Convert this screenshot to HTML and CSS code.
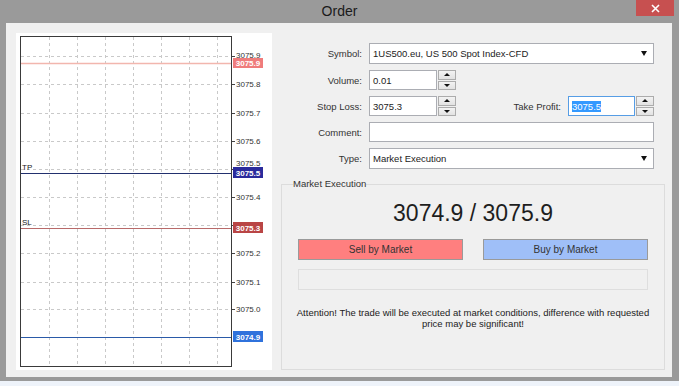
FILE: index.html
```html
<!DOCTYPE html>
<html lang="en">
<head>
    <meta charset="UTF-8">
    <meta name="viewport" content="width=device-width, initial-scale=1.0">
    <title>Order</title>
    <link rel="stylesheet" href="styles.css">
</head>
<body>
    <div class="window">
        <div class="titlebar">
            <span></span>
            <span class="title">Order</span>
            <button class="close">
                <svg width="9" height="9" viewBox="0 0 9 9"><path d="M1 1L8 8M8 1L1 8" stroke="#fff" stroke-width="1.6"/></svg>
            </button>
        </div>
        <div class="content">
            <div class="chart">
                <svg width="256" height="337" viewBox="0 0 256 337">
                    <g stroke="#c9c9c9" stroke-dasharray="3 3">
                        <path d="M33.5 4V333M61.5 4V333M89.5 4V333M117.5 4V333M145.5 4V333M173.5 4V333M201.5 4V333"/>
                        <path d="M5 23.5H215M5 51.5H215M5 80.5H215M5 108.5H215M5 136.5H215M5 164.5H215M5 192.5H215M5 220.5H215M5 249.5H215M5 276.5H215"/>
                    </g>
                    <path d="M215 23.5H219M215 51.5H219M215 80.5H219M215 108.5H219M215 136.5H219M215 164.5H219M215 192.5H219M215 220.5H219M215 249.5H219M215 276.5H219" stroke="#444"/>
                    <g class="axis">
                        <text x="220" y="22">3075.9</text>
                        <text x="220" y="51.5">3075.8</text>
                        <text x="220" y="80.5">3075.7</text>
                        <text x="220" y="108.5">3075.6</text>
                        <text x="220" y="130">3075.5</text>
                        <text x="220" y="164.5">3075.4</text>
                        <text x="220" y="220.5">3075.2</text>
                        <text x="220" y="249.5">3075.1</text>
                        <text x="220" y="276.5">3075.0</text>
                    </g>
                    <path d="M5 30.5H215" stroke="#f2b6ae" stroke-width="1.5"/>
                    <path d="M5 140.5H215" stroke="#22306e"/>
                    <path d="M5 195.5H215" stroke="#b86a6a"/>
                    <path d="M5 304.5H215" stroke="#2a5aa8"/>
                    <rect x="4.5" y="3.5" width="211" height="330" fill="none" stroke="#3a3a3a"/>
                    <text class="mark" x="6" y="137">TP</text>
                    <text class="mark" x="6" y="192">SL</text>
                    <rect x="217" y="25" width="30" height="10" fill="#ef7c7c"/>
                    <rect x="217" y="134" width="30" height="11" fill="#2b2b9c"/>
                    <rect x="217" y="189" width="30" height="11" fill="#b94545"/>
                    <rect x="217" y="298" width="30" height="11" fill="#2f72dc"/>
                    <g class="tag">
                        <text x="232" y="30.5">3075.9</text>
                        <text x="232" y="140">3075.5</text>
                        <text x="232" y="195">3075.3</text>
                        <text x="232" y="304">3074.9</text>
                    </g>
                </svg>
            </div>
            <div class="side">
                <div class="form">
                    <label>Symbol:</label>
                    <div class="field select">1US500.eu, US 500 Spot Index-CFD <span class="arrow"></span></div>

                    <label>Volume:</label>
                    <div class="pair">
                        <div class="spin">
                            <div class="field">0.01</div>
                            <div class="spinner"><span class="up"></span><span class="down"></span></div>
                        </div>
                    </div>

                    <label>Stop Loss:</label>
                    <div class="pair">
                        <div class="spin">
                            <div class="field">3075.3</div>
                            <div class="spinner"><span class="up"></span><span class="down"></span></div>
                        </div>
                        <label class="tp-label">Take Profit:</label>
                        <div class="spin tp">
                            <div class="field focus"><span class="sel">3075.5</span></div>
                            <div class="spinner"><span class="up"></span><span class="down"></span></div>
                        </div>
                    </div>

                    <label>Comment:</label>
                    <div class="field"></div>

                    <label>Type:</label>
                    <div class="field select">Market Execution <span class="arrow"></span></div>
                </div>

                <fieldset class="group">
                    <legend>Market Execution</legend>
                    <div class="price">3074.9 / 3075.9</div>
                    <div class="buttons">
                        <button class="sell">Sell by Market</button>
                        <button class="buy">Buy by Market</button>
                    </div>
                    <div class="status"></div>
                    <p class="note">Attention! The trade will be executed at market conditions, difference with requested<br>price may be significant!</p>
                </fieldset>
            </div>
        </div>
    </div>
</body>
</html>
```

FILE: styles.css
```css
body {
    margin: 0;
    background-color: #eef3fa;
    font-family: "Liberation Sans", Arial, sans-serif;
    font-size: 9.5px;
    color: #222;
}
.window {
    width: 679px;
    height: 381px;
    background-color: #9a9a9a;
    display: flex;
    flex-direction: column;
}
.titlebar {
    height: 23px;
    display: grid;
    grid-template-columns: 1fr auto 1fr;
    align-items: start;
}
.title {
    font-size: 14px;
    line-height: 22px;
    color: #1a1a1a;
}
.close {
    justify-self: end;
    margin-right: 5px;
    width: 38px;
    height: 16px;
    padding: 0;
    border: none;
    background-color: #c75050;
    display: flex;
    align-items: center;
    justify-content: center;
}
.content {
    flex: 1;
    margin: 0 7px 4px 6px;
    padding: 10px 0 0 10px;
    background-color: #f0f0f0;
    display: flex;
    gap: 9px;
}
.chart {
    width: 256px;
    height: 337px;
    background-color: #fff;
}
.chart svg {
    display: block;
}
.axis text {
    font-size: 8px;
    fill: #333;
    dominant-baseline: central;
}
.mark {
    font-size: 8px;
    fill: #222;
}
.tag text {
    font-size: 8px;
    font-weight: bold;
    fill: #fff;
    text-anchor: middle;
    dominant-baseline: central;
}
.side {
    width: 384px;
    padding-top: 10px;
    display: flex;
    flex-direction: column;
}
.form {
    display: grid;
    grid-template-columns: 81px 285px;
    grid-template-rows: 21px 20px 20px 20px 21px;
    column-gap: 7px;
    row-gap: 6px;
}
.form label {
    text-align: right;
    align-self: center;
    color: #333;
}
.field {
    box-sizing: border-box;
    height: 100%;
    background-color: #fff;
    border: 1px solid #abadb3;
    padding: 0 3px;
    display: flex;
    align-items: center;
    color: #222;
}
.select {
    justify-content: space-between;
    padding-right: 6px;
}
.arrow {
    width: 0;
    height: 0;
    border-left: 3px solid transparent;
    border-right: 3px solid transparent;
    border-top: 5px solid #111;
}
.pair {
    display: flex;
}
.spin {
    width: 87px;
    display: flex;
}
.spin .field {
    width: 68px;
}
.spinner {
    width: 19px;
    display: flex;
    flex-direction: column;
    gap: 1px;
    padding: 0 0 0 1px;
    box-sizing: border-box;
}
.spinner span {
    flex: 1;
    border: 1px solid #acacac;
    background: linear-gradient(#f3f3f3, #e2e2e2);
    display: flex;
    align-items: center;
    justify-content: center;
}
.spinner .up::before {
    content: "";
    border-left: 3px solid transparent;
    border-right: 3px solid transparent;
    border-bottom: 3px solid #111;
}
.spinner .down::before {
    content: "";
    border-left: 3px solid transparent;
    border-right: 3px solid transparent;
    border-top: 3px solid #111;
}
.form .tp-label {
    flex: 1;
    padding-right: 7px;
}
.spin.tp {
    width: 86px;
}
.focus {
    border-color: #569de5;
}
.sel {
    background-color: #3399ff;
    color: #fff;
}
.group {
    flex: 1;
    margin: 9px 0 7px 0;
    padding: 0 16px;
    border: 1px solid #dcdcdc;
    min-width: 0;
}
.group legend {
    margin-left: -5px;
    padding: 0;
    line-height: 12px;
    color: #333;
}
.price {
    margin-top: 9px;
    text-align: center;
    font-size: 23px;
    line-height: 28px;
    color: #1e1e1e;
}
.buttons {
    margin-top: 12px;
    display: flex;
    gap: 20px;
}
.buttons button {
    width: 165px;
    height: 21px;
    font-family: inherit;
    font-size: 10px;
    color: #333;
    border: 1px solid #9a9a9a;
    padding: 0;
}
.sell {
    background-color: #ff7f7f;
}
.buy {
    background-color: #9fbff8;
}
.status {
    margin-top: 9px;
    height: 21px;
    box-sizing: border-box;
    border: 1px solid #dedede;
}
.note {
    margin: 17px -14px 0 -14px;
    text-align: center;
    line-height: 11px;
    white-space: nowrap;
    color: #222;
}
```
